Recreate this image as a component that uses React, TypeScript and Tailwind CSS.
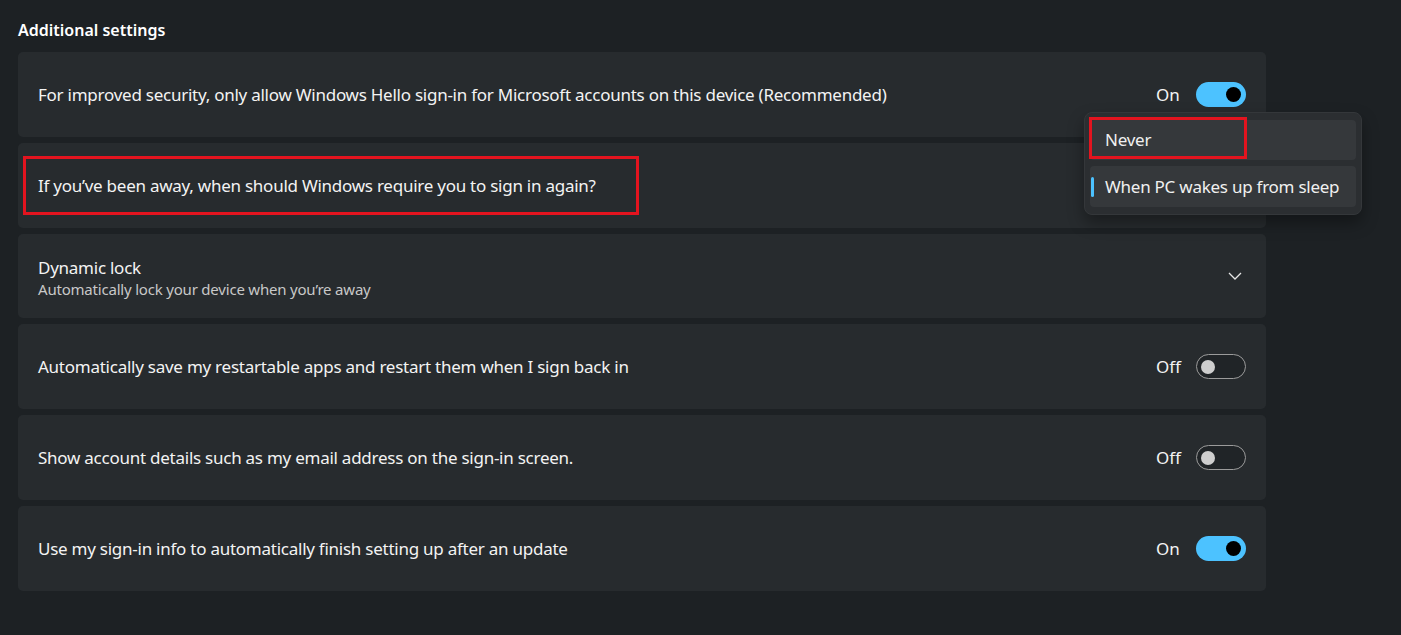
// Windows 11 Settings — "Additional settings" list with an open dropdown.

const font = { fontFamily: '"Noto Sans", "Open Sans", sans-serif' };

function Toggle({ on }: { on: boolean }) {
  return (
    <div className="flex items-center gap-[16px]">
      <span className="w-[24px] text-[17px] text-[#f3f3f3]">{on ? "On" : "Off"}</span>
      {on ? (
        <div className="flex h-[25px] w-[50px] items-center justify-end rounded-full bg-[#4cc2ff] pr-[5px]">
          <div className="h-[15px] w-[15px] rounded-full bg-black" />
        </div>
      ) : (
        <div className="flex h-[25px] w-[50px] items-center rounded-full border border-[#9b9b9b] bg-[#202427] pl-[4px]">
          <div className="h-[14px] w-[14px] rounded-full bg-[#cecece]" />
        </div>
      )}
    </div>
  );
}

function Row({ label, toggle }: { label: string; toggle?: boolean }) {
  return (
    <div className="flex h-[85px] items-center justify-between rounded-[5px] bg-[#272b2e] pl-[20px] pr-[20px]">
      <span className="text-[17px] tracking-[-0.25px] text-[#f3f3f3]">{label}</span>
      {toggle !== undefined && <Toggle on={toggle} />}
    </div>
  );
}

export default function App() {
  return (
    <div className="relative h-[635px] w-full bg-[#1d2124] pl-[18px] pt-[18px]" style={font}>
      <h2 className="text-[16px] font-semibold leading-[24px] text-white">Additional settings</h2>

      <div className="mt-[10px] flex w-[1248px] flex-col gap-[6px]">
        <Row
          label="For improved security, only allow Windows Hello sign-in for Microsoft accounts on this device (Recommended)"
          toggle={true}
        />
        <Row label="If you’ve been away, when should Windows require you to sign in again?" />
        <div className="flex h-[84px] items-center justify-between rounded-[5px] bg-[#272b2e] pl-[20px] pr-[24px]">
          <div className="flex flex-col pt-[3px]">
            <span className="text-[17px] leading-[22px] tracking-[-0.25px] text-[#f3f3f3]">Dynamic lock</span>
            <span className="text-[15px] leading-[20px] tracking-[-0.2px] text-[#c8c8c8]">
              Automatically lock your device when you’re away
            </span>
          </div>
          <svg width="14" height="8" viewBox="0 0 14 8" fill="none" stroke="#e6e6e6" strokeWidth="1.3">
            <path d="M1 1l6 6 6-6" />
          </svg>
        </div>
        <Row label="Automatically save my restartable apps and restart them when I sign back in" toggle={false} />
        <Row label="Show account details such as my email address on the sign-in screen." toggle={false} />
        <Row label="Use my sign-in info to automatically finish setting up after an update" toggle={true} />
      </div>

      {/* red highlight around the question */}
      <div className="absolute left-[23px] top-[156px] h-[59px] w-[616px] border-[3px] border-[#e3141f]" />

      {/* open dropdown */}
      <div className="absolute left-[1084px] top-[112px] flex w-[278px] flex-col gap-[6px] rounded-[8px] border border-[#34373a] bg-[#2b2e31] px-[5px] py-[7px] text-[17px] tracking-[-0.25px] text-[#f0f0f0] shadow-[0_8px_16px_rgba(0,0,0,0.35)]">
        <div className="relative flex h-[40px] items-center rounded-[4px] bg-[#35383b] pl-[15px]">
          Never
          <div className="absolute -left-[1px] -top-[3px] h-[42px] w-[158px] border-[3px] border-[#e3141f]" />
        </div>
        <div className="relative flex h-[41px] items-center rounded-[4px] bg-[#35383b] pl-[15px]">
          <div className="absolute left-[1px] top-[11px] h-[20px] w-[3px] rounded-full bg-[#4cc2ff]" />
          When PC wakes up from sleep
        </div>
      </div>
    </div>
  );
}
